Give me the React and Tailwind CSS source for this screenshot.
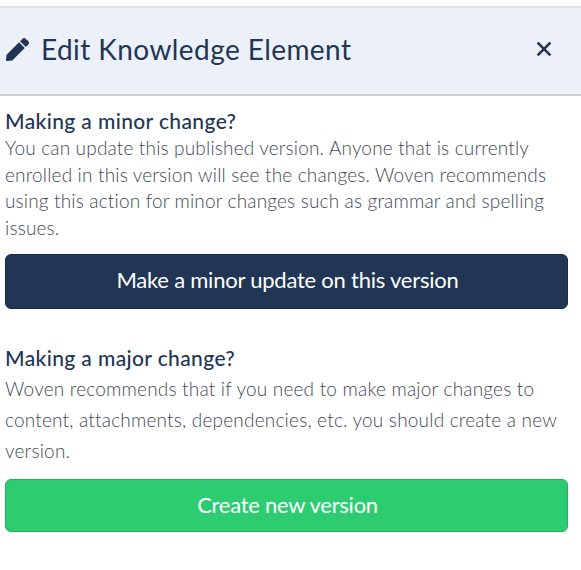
import { FaPen } from "react-icons/fa";

const Header = ({ title }) => (
  <header className="flex h-[90px] items-center justify-between border-t-2 border-b-2 border-t-[#dfe1e3] border-b-[#cfd0d2] bg-[#ecf0f8] pl-[6px] pr-[29px] text-[#213654]">
    <div className="flex items-center pb-[4px]">
      <FaPen className="size-[23px]" />
      <h1 className="ml-[12px] text-[28px] leading-9 tracking-[0.42px] whitespace-nowrap">{title}</h1>
    </div>
    <button aria-label="Close" className="cursor-pointer pb-[4px]">
      <svg className="size-4" viewBox="0 0 16 16" fill="none" stroke="currentColor" strokeWidth="2.6">
        <path d="M1.6 1.6 14.4 14.4M14.4 1.6 1.6 14.4" />
      </svg>
    </button>
  </header>
);

const App = () => {
  return (
    <div className="h-[570px] w-[581px] overflow-hidden bg-white pt-[6px] font-['Lato',sans-serif] text-[#213654]">
      <Header title="Edit Knowledge Element" />

      <main className="pl-[5px] pr-[13px]">
        {/* Minor change */}
        <section className="pt-[11px]">
          <h2 className="text-[21px] leading-[27px] font-medium tracking-[0.38px]">Making a minor change?</h2>
          <p className="pt-px text-[19px] leading-[26.7px] font-light tracking-[0.17px] whitespace-nowrap text-[#3f4955]">
            You can update this published version. Anyone that is currently<br />
            enrolled in this version will see the changes. Woven recommends<br />
            using this action for minor changes such as grammar and spelling<br />
            issues.
          </p>
          <button className="mt-[12px] flex h-[55px] w-full cursor-pointer items-center justify-center rounded-[6px] border border-[#142a48] bg-[#213654] pb-[3px] pl-[2px] text-[22px] tracking-[-0.23px] text-white">
            Make a minor update on this version
          </button>
        </section>

        {/* Major change */}
        <section className="pt-[35px]">
          <h2 className="text-[21px] leading-[27px] font-medium tracking-[0.38px]">Making a major change?</h2>
          <p className="pt-[2px] text-[19px] leading-[31.2px] font-light tracking-[0.2px] whitespace-nowrap text-[#3f4955]">
            Woven recommends that if you need to make major changes to<br />
            content, attachments, dependencies, etc. you should create a new<br />
            version.
          </p>
          <button className="mt-[13px] flex h-[53px] w-full cursor-pointer items-center justify-center rounded-[6px] border border-[#20b15b] bg-[#2ecc71] pb-[3px] pl-[2px] text-[22px] tracking-[-0.27px] text-white">
            Create new version
          </button>
        </section>
      </main>
    </div>
  );
};

export default App;
